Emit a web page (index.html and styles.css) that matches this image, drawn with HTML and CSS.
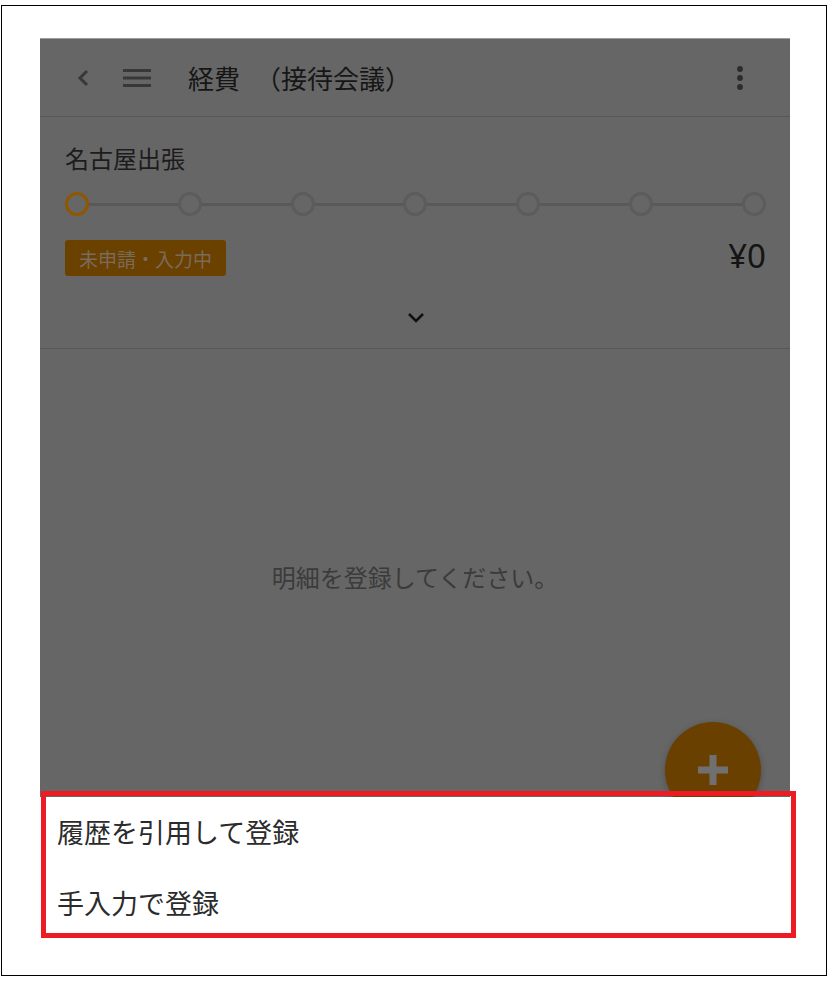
FILE: index.html
```html
<!DOCTYPE html>
<html lang="ja">
<head>
<meta charset="utf-8">
<title>経費（接待会議）</title>
<link rel="stylesheet" href="styles.css">
</head>
<body>
<div class="frame">
  <div class="screen">
    <header class="appbar">
      <svg class="icon-back" width="12" height="18" viewBox="0 0 12 18"><polyline points="10,2 3,9 10,16" fill="none" stroke="currentColor" stroke-width="3"/></svg>
      <svg class="icon-menu" width="28" height="18" viewBox="0 0 28 18"><rect x="0" y="0" width="28" height="3"/><rect x="0" y="7.5" width="28" height="3"/><rect x="0" y="15" width="28" height="3"/></svg>
      <h1 class="title">経費<span class="title-sub">（接待会議）</span></h1>
      <svg class="icon-more" width="6" height="24" viewBox="0 0 6 24"><circle cx="3" cy="3" r="2.9"/><circle cx="3" cy="12" r="2.9"/><circle cx="3" cy="21" r="2.9"/></svg>
    </header>

    <section class="summary">
      <div class="trip">名古屋出張</div>
      <div class="stepper">
        <span class="step step-current"></span><span class="link"></span>
        <span class="step"></span><span class="link"></span>
        <span class="step"></span><span class="link"></span>
        <span class="step"></span><span class="link"></span>
        <span class="step"></span><span class="link"></span>
        <span class="step"></span><span class="link"></span>
        <span class="step"></span>
      </div>
      <div class="status-row">
        <span class="badge">未申請・入力中</span>
        <span class="amount">¥0</span>
      </div>
      <div class="expand">
        <svg width="18" height="12" viewBox="0 0 18 12"><polyline points="2,2 9,9 16,2" fill="none" stroke="currentColor" stroke-width="2.6"/></svg>
      </div>
    </section>

    <main class="empty">
      <p class="empty-text">明細を登録してください。</p>
    </main>

    <button class="fab" type="button">
      <svg width="30" height="30" viewBox="0 0 30 30"><rect x="11.5" y="0" width="7" height="30"/><rect x="0" y="11.5" width="30" height="7"/></svg>
    </button>

    <div class="sheet">
      <div class="sheet-item">履歴を引用して登録</div>
      <div class="sheet-item">手入力で登録</div>
    </div>

    <div class="highlight"></div>
  </div>
</div>
</body>
</html>
```

FILE: styles.css
```css
* { box-sizing: border-box; }

html, body {
  margin: 0;
  background: #fff;
}

body {
  padding: 5px 0 0 1px;
  font-family: "Noto Sans CJK JP", "Noto Sans", sans-serif;
}

.frame {
  width: 826px;
  height: 971px;
  border: 1px solid #000;
  padding: 32px 0 0 38px;
}

.screen {
  position: relative;
  width: 750px;
  height: 897px;
  background: #666;
  border-top: 1px solid #9c9c9c;
}

/* App bar */
.appbar {
  height: 78px;
  display: flex;
  align-items: center;
  padding: 0 47px 0 37px;
  border-bottom: 1px solid #575757;
}

.icon-back {
  color: #383838;
  flex: none;
}

.icon-menu {
  fill: #383838;
  margin-left: 34px;
  flex: none;
}

.title {
  margin: 0 0 0 37px;
  font-size: 26px;
  font-weight: 400;
  line-height: 36px;
  color: #161616;
  flex: 1;
  white-space: nowrap;
}

.title-sub {
  margin-left: 15px;
}

.icon-more {
  fill: #2c2c2c;
  flex: none;
}

/* Summary */
.summary {
  padding: 25px 24px 18px 25px;
  border-bottom: 1px solid #575757;
}

.trip {
  font-size: 24px;
  line-height: 32px;
  color: #1c1c1c;
}

.stepper {
  margin-top: 18px;
  display: flex;
  align-items: center;
}

.step {
  flex: none;
  width: 24px;
  height: 24px;
  border: 3px solid #5c5c5c;
  border-radius: 50%;
}

.step-current {
  border-color: #8e5700;
}

.link {
  flex: 1;
  height: 3px;
  background: #595959;
}

.status-row {
  margin-top: 24px;
  height: 36px;
  display: flex;
  align-items: center;
  justify-content: space-between;
}

.badge {
  height: 36px;
  padding: 0 14px;
  display: flex;
  align-items: center;
  background: #6b4100;
  border-radius: 3px;
  font-size: 19px;
  color: #7a6b5c;
}

.amount {
  font-family: "Noto Sans", "Open Sans", sans-serif;
  font-size: 33px;
  line-height: 26px;
  color: #141414;
  margin: 0 0 5px;
}

.expand {
  margin-top: 30px;
  height: 24px;
  display: flex;
  justify-content: center;
  align-items: center;
  color: #111;
}

/* Empty state */
.empty {
  padding-top: 211px;
}

.empty-text {
  margin: 0;
  text-align: center;
  font-size: 24px;
  line-height: 34px;
  color: #3b3b3b;
}

/* Floating action button */
.fab {
  position: absolute;
  left: 625px;
  top: 683px;
  width: 96px;
  height: 96px;
  border: none;
  border-radius: 50%;
  background: #6a4000;
  box-shadow: 0 2px 6px rgba(0, 0, 0, 0.25);
  display: flex;
  align-items: center;
  justify-content: center;
  padding: 0;
  fill: #707070;
}

/* Bottom sheet */
.sheet {
  position: absolute;
  left: 0;
  right: 0;
  bottom: 0;
  height: 138px;
  background: #fff;
}

.sheet-item {
  height: 71px;
  display: flex;
  align-items: center;
  padding: 0 0 2px 17px;
  font-size: 27px;
  color: #2b2b2b;
}

/* Annotation box */
.highlight {
  position: absolute;
  left: 1px;
  top: 752px;
  width: 755px;
  height: 147px;
  border: 5px solid #ed1c24;
}
```
